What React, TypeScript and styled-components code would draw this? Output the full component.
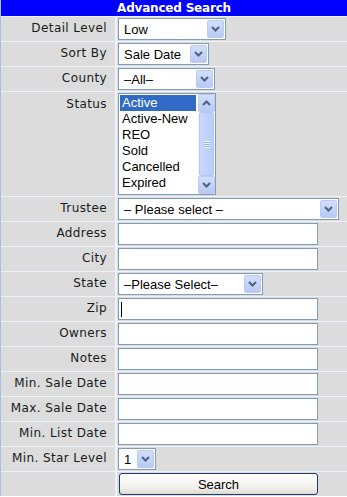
import { FC, Fragment } from "react";
import styled, { createGlobalStyle } from "styled-components";

const GlobalStyle = createGlobalStyle`
  body {
    margin: 0;
    background: #ffffff;
  }
`;

const SearchTable = styled.div`
  width: 346px;
  display: grid;
  grid-template-columns: 114px 1fr;
  column-gap: 2px;
  row-gap: 1px;
  background: #eef3fb;
  border-left: 1px solid #a9c0e0;
  font-family: "DejaVu Sans", Verdana, sans-serif;
`;

const Header = styled.div`
  grid-column: 1 / -1;
  height: 16px;
  line-height: 16px;
  background: #0000ff;
  color: #ffffff;
  font-weight: bold;
  font-size: 12px;
  letter-spacing: -0.2px;
  text-align: center;
`;

const Label = styled.div<{ $top?: boolean }>`
  background: #dcdcdc;
  color: #1a1a1a;
  font-size: 12px;
  letter-spacing: 0.4px;
  text-align: right;
  padding: ${(p) => (p.$top ? "5px" : "4px")} 8px 0 0;
  min-height: 24px;
  box-sizing: border-box;
`;

const Value = styled.div`
  background: #dcdcdc;
  padding: 1px;
  min-height: 24px;
  box-sizing: border-box;
`;

// XP style dropdown
const SelectBox = styled.div<{ $width: number }>`
  box-sizing: border-box;
  width: ${(p) => p.$width}px;
  height: 22px;
  display: flex;
  align-items: center;
  border: 1px solid #7f9db9;
  background: #ffffff;
  padding: 1px;
  font: 13px "Liberation Sans", Arial, sans-serif;
  color: #000000;
`;

const SelectText = styled.span`
  flex: 1;
  padding-left: 4px;
  white-space: nowrap;
  overflow: hidden;
`;

const ArrowButton = styled.span`
  width: 17px;
  height: 18px;
  box-sizing: border-box;
  display: flex;
  align-items: center;
  justify-content: center;
  border: 1px solid #bccbf0;
  border-radius: 2px;
  background: linear-gradient(#d3defa, #b7c9f4);
  flex-shrink: 0;
`;

const Chevron: FC<{ up?: boolean }> = ({ up }) => (
  <svg width="9" height="6" viewBox="0 0 9 6">
    <path
      d={up ? "M1 5 L4.5 1.5 L8 5" : "M1 1 L4.5 4.5 L8 1"}
      fill="none"
      stroke="#4d6185"
      strokeWidth="2"
    />
  </svg>
);

const Select: FC<{ width: number; value: string }> = ({ width, value }) => (
  <SelectBox $width={width}>
    <SelectText>{value}</SelectText>
    <ArrowButton>
      <Chevron />
    </ArrowButton>
  </SelectBox>
);

const ListBox = styled.div`
  box-sizing: border-box;
  width: 98px;
  height: 102px;
  display: flex;
  border: 1px solid #7f9db9;
  background: #ffffff;
  font: 13px "Liberation Sans", Arial, sans-serif;
`;

const Options = styled.div`
  flex: 1;
  padding: 1px 2px 0 1px;
`;

const Option = styled.div<{ $selected?: boolean }>`
  height: 16px;
  line-height: 16px;
  padding-left: 2px;
  background: ${(p) => (p.$selected ? "#316ac5" : "transparent")};
  color: ${(p) => (p.$selected ? "#ffffff" : "#000000")};
`;

const ScrollBar = styled.div`
  width: 17px;
  display: flex;
  flex-direction: column;
  background: #f3f3f9;
`;

const Thumb = styled.div`
  flex: 1;
  margin: 0 1px;
  border: 1px solid #b6c9f3;
  border-radius: 2px;
  background: linear-gradient(90deg, #cbd9fb, #b9cdf7);
  display: flex;
  align-items: center;
  justify-content: center;
`;

const Grip = styled.div`
  width: 6px;
  height: 7px;
  background: repeating-linear-gradient(#eef3fe 0 1px, #9fb4e6 1px 2px);
`;

const TextBox = styled.div`
  box-sizing: border-box;
  width: 200px;
  height: 22px;
  border: 1px solid #7f9db9;
  background: #ffffff;
  display: flex;
  align-items: center;
  padding-left: 2px;
`;

const Caret = styled.span`
  width: 1px;
  height: 15px;
  background: #000000;
`;

const SearchButton = styled.button`
  box-sizing: border-box;
  width: 199px;
  height: 22px;
  margin: 0 0 0 1px;
  border: 1px solid #1c3a6b;
  border-radius: 3px;
  background: linear-gradient(#ffffff, #f1f0ea 70%, #dcdad0);
  font: 13px "Liberation Sans", Arial, sans-serif;
  color: #000000;
  padding: 0;
`;

const statusOptions = ["Active", "Active-New", "REO", "Sold", "Cancelled", "Expired"];

const addressFields = ["Address", "City"];
const detailFields = ["Zip", "Owners", "Notes", "Min. Sale Date", "Max. Sale Date", "Min. List Date"];

const App: FC = () => {
  return (
    <>
      <GlobalStyle />
      <SearchTable>
        <Header>Advanced Search</Header>

        <Label>Detail Level</Label>
        <Value>
          <Select width={108} value="Low" />
        </Value>

        <Label>Sort By</Label>
        <Value>
          <Select width={91} value="Sale Date" />
        </Value>

        <Label>County</Label>
        <Value>
          <Select width={97} value="–All–" />
        </Value>

        <Label $top>Status</Label>
        <Value>
          <ListBox>
            <Options>
              {statusOptions.map((option, i) => (
                <Option key={option} $selected={i === 0}>
                  {option}
                </Option>
              ))}
            </Options>
            <ScrollBar>
              <ArrowButton>
                <Chevron up />
              </ArrowButton>
              <Thumb>
                <Grip />
              </Thumb>
              <ArrowButton>
                <Chevron />
              </ArrowButton>
            </ScrollBar>
          </ListBox>
        </Value>

        <Label>Trustee</Label>
        <Value>
          <Select width={221} value="– Please select –" />
        </Value>

        {addressFields.map((field) => (
          <Fragment key={field}>
            <Label>{field}</Label>
            <Value>
              <TextBox />
            </Value>
          </Fragment>
        ))}

        <Label>State</Label>
        <Value>
          <Select width={145} value="–Please Select–" />
        </Value>

        {detailFields.map((field) => (
          <Fragment key={field}>
            <Label>{field}</Label>
            <Value>
              <TextBox>{field === "Zip" && <Caret />}</TextBox>
            </Value>
          </Fragment>
        ))}

        <Label>Min. Star Level</Label>
        <Value>
          <Select width={38} value="1" />
        </Value>

        <Label />
        <Value>
          <SearchButton>Search</SearchButton>
        </Value>
      </SearchTable>
    </>
  );
};

export default App;
